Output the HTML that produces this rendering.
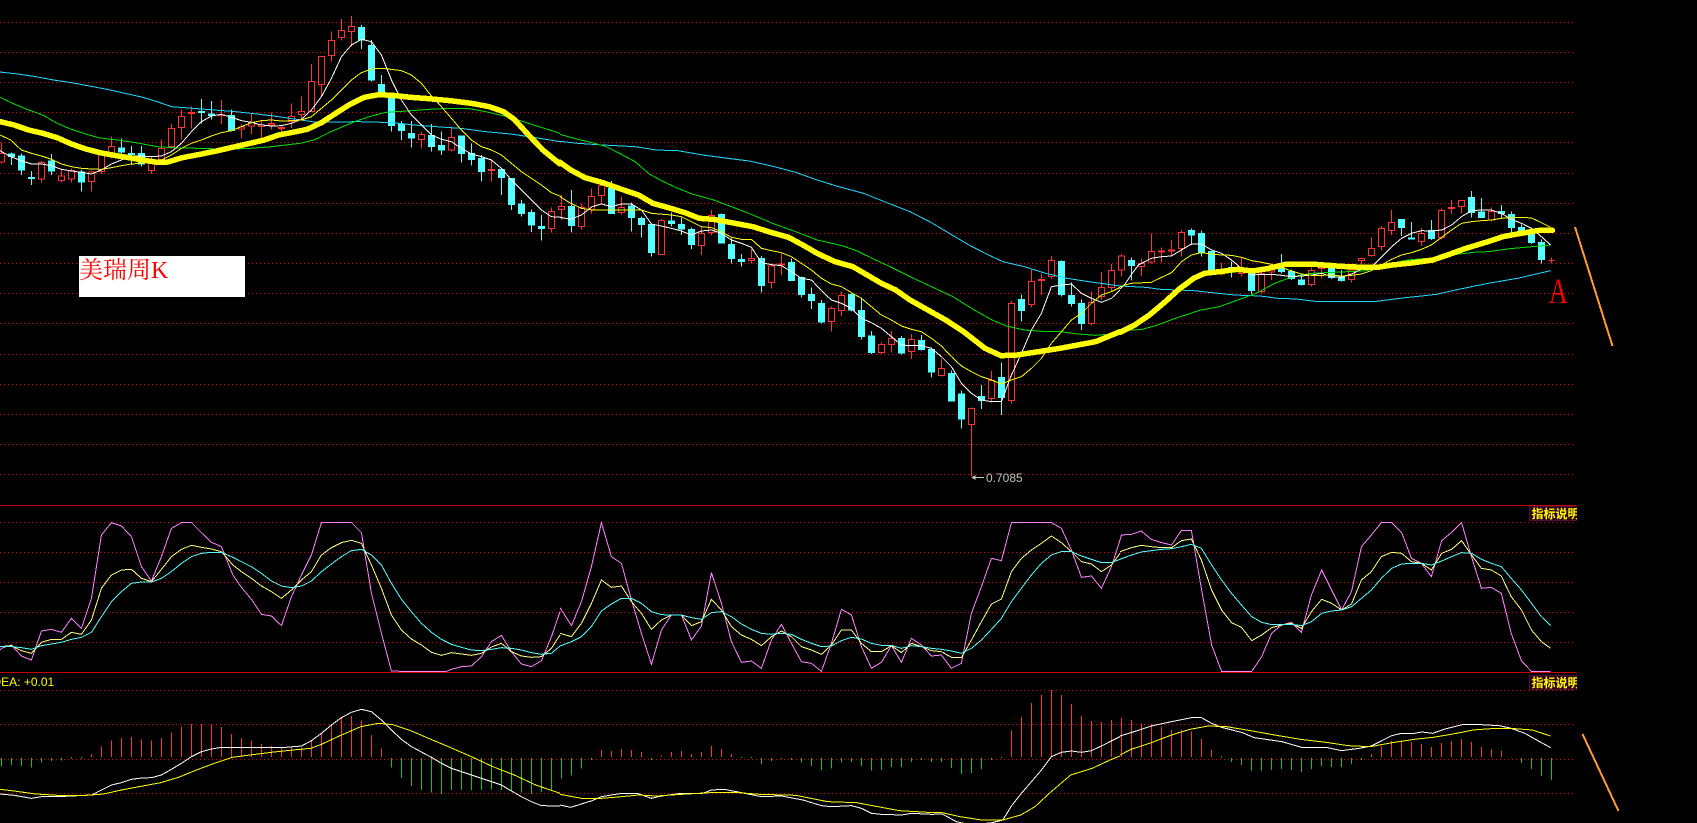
<!DOCTYPE html>
<html><head><meta charset="utf-8"><title>美瑞周K</title>
<style>
html,body{margin:0;padding:0;background:#000;width:1697px;height:823px;overflow:hidden}
svg{display:block;position:absolute;left:0;top:0}
path,polyline,line{vector-effect:non-scaling-stroke;shape-rendering:crispEdges;fill:none}
.w{stroke:#fff;stroke-width:1}.y{stroke:#ff0;stroke-width:1}.g{stroke:#00e000;stroke-width:1}.c{stroke:#20d8ff;stroke-width:1}
.t{stroke:#ff0;stroke-width:5.5;stroke-linejoin:round;stroke-linecap:round}
.j{stroke:#ff80ff;stroke-width:1}.k{stroke:#ffff80;stroke-width:1}.d{stroke:#55ffff;stroke-width:1}
.rw{stroke:#ff3232;stroke-width:1}.cw{stroke:#55ffff;stroke-width:1}
.rb{stroke:#ff3232;stroke-width:1;fill:#000}.cb{stroke:#55ffff;stroke-width:1;fill:#55ffff}
.my{stroke:#ff0;stroke-width:1}.mw{stroke:#fff;stroke-width:1}
</style></head><body>
<svg width="1697" height="823" viewBox="0 0 1697 823" xmlns="http://www.w3.org/2000/svg">
<rect width="1697" height="823" fill="#000"/>
<!-- grid -->
<path stroke="#e00000" stroke-dasharray="1 3" d="M0 22.5H1576M0 52.5H1576M0 82.5H1576M0 112.5H1576M0 142.5H1576M0 173.5H1576M0 203.5H1576M0 233.5H1576M0 263.5H1576M0 293.5H1576M0 323.5H1576M0 354.5H1576M0 384.5H1576M0 414.5H1576M0 444.5H1576M0 474.5H1576M0 522.5H1576M0 552.5H1576M0 582.5H1576M0 612.5H1576M0 642.5H1576M0 690.5H1576M0 724.5H1576M0 759.5H1576M0 793.5H1576"/>
<path stroke="#c80000" d="M0 505.5H1576M0 672.5H1576"/>

<!-- white label -->
<rect x="79" y="256" width="166" height="41" fill="#fff"/>
<text x="79" y="278" font-size="24" fill="#f00" font-family="'Liberation Serif','Noto Serif CJK SC',serif">美瑞周K</text>

<!-- candles A -->
<g transform="scale(1,.33333)">
<path class="rw" d="M1.5 428V490M41.5 483V548M61.5 508V548M71.5 505V548M91.5 512V575M101.5 460V522M111.5 410V475M151.5 470V522M161.5 418V480M171.5 372V445M181.5 328V418M191.5 320V385M221.5 300V372M241.5 372V414M251.5 340V402M261.5 362V418M271.5 338V388M281.5 378V398M291.5 310V384M301.5 290V358M311.5 192V336M321.5 168V290M331.5 95V185M341.5 57V122M351.5 48V140M421.5 396V445M451.5 380V455M491.5 478V545M551.5 622V698"/>
<path class="cw" d="M11.5 458V495M21.5 460V525M31.5 513V555M51.5 462V525M81.5 510V575M121.5 415V460M131.5 438V495M141.5 438V500M201.5 297V370M211.5 303V358M231.5 328V395M361.5 75V147M371.5 120V245M381.5 225V282M391.5 280V395M401.5 363V420M411.5 363V443M431.5 372V455M441.5 395V465M461.5 406V488M471.5 430V497M481.5 465V545M501.5 508V585M511.5 535V630M521.5 600V650M531.5 628V696M541.5 645V722"/>
<path class="rb" d="M-1.5 460h6v26h-6zM38.5 487h6v50h-6zM58.5 528h6v14h-6zM68.5 511h6v26h-6zM88.5 516h6v29h-6zM98.5 464h6v51h-6zM108.5 439h6v26h-6zM148.5 478h6v34h-6zM158.5 445h6v33h-6zM168.5 385h6v55h-6zM178.5 349h6v33h-6zM188.5 338h6v2h-6zM218.5 345h6v2h-6zM238.5 381h6v6h-6zM248.5 368h6v10h-6zM258.5 375h6v5h-6zM268.5 370h6v5h-6zM278.5 382h6v4h-6zM288.5 350h6v15h-6zM298.5 334h6v10h-6zM308.5 244h6v91h-6zM318.5 169h6v84h-6zM328.5 122h6v44h-6zM338.5 92h6v21h-6zM348.5 79h6v15h-6zM418.5 403h6v16h-6zM448.5 412h6v38h-6zM488.5 508h6v4h-6zM548.5 635h6v51h-6z"/>
<path class="cb" d="M8.5 462h6v8h-6zM18.5 468h6v42h-6zM28.5 532h6v4h-6zM48.5 483h6v30h-6zM78.5 516h6v30h-6zM118.5 444h6v12h-6zM128.5 460h6v4h-6zM138.5 460h6v32h-6zM198.5 334h6v4h-6zM208.5 342h6v4h-6zM228.5 346h6v46h-6zM358.5 82h6v38h-6zM368.5 136h6v104h-6zM378.5 253h6v27h-6zM388.5 293h6v83h-6zM398.5 373h6v19h-6zM408.5 400h6v14h-6zM428.5 406h6v34h-6zM438.5 436h6v14h-6zM458.5 408h6v53h-6zM468.5 460h6v19h-6zM478.5 475h6v40h-6zM498.5 508h6v25h-6zM508.5 535h6v79h-6zM518.5 612h6v29h-6zM528.5 637h6v38h-6zM538.5 679h6v7h-6z"/>
</g>
<!-- candles B -->
<g transform="translate(0,100) scale(1,.33333)">
<path class="rw" d="M561.5 285V360M581.5 310V388M591.5 265V340M601.5 255V310M621.5 290V343M661.5 357V465M701.5 378V465M711.5 330V405M751.5 445V490M771.5 490V566M781.5 460V525M831.5 620V695M841.5 575V648M881.5 727V762M891.5 693V757M911.5 702V777M941.5 775V830M971.5 922V1130M991.5 813V907M1011.5 603V910M1031.5 508V623M1041.5 520V585M1051.5 468V537M1091.5 574V677M1101.5 516V600M1111.5 492V574"/>
<path class="cw" d="M571.5 270V398M611.5 243V342M631.5 307V395M641.5 350V413M651.5 370V470M671.5 337V380M681.5 352V405M691.5 382V447M721.5 340V430M731.5 415V490M741.5 462V500M761.5 468V578M791.5 475V543M801.5 530V593M811.5 562V627M821.5 600V670M851.5 580V635M861.5 595V718M871.5 693V762M901.5 708V763M921.5 705V752M931.5 742V833M951.5 812V903M961.5 872V985M981.5 855V927M1001.5 787V945M1021.5 583V665M1061.5 482V590M1071.5 548V620M1081.5 598V690"/>
<path class="rb" d="M558.5 320h6v8h-6zM578.5 322h6v58h-6zM588.5 290h6v38h-6zM598.5 257h6v29h-6zM618.5 323h6v14h-6zM658.5 362h6v102h-6zM698.5 400h6v36h-6zM708.5 347h6v51h-6zM748.5 476h6v6h-6zM768.5 498h6v49h-6zM778.5 492h6v3h-6zM828.5 625h6v39h-6zM838.5 587h6v44h-6zM878.5 734h6v24h-6zM888.5 716h6v17h-6zM908.5 719h6v36h-6zM938.5 806h6v21h-6zM968.5 926h6v47h-6zM988.5 841h6v54h-6zM1008.5 611h6v291h-6zM1028.5 545h6v68h-6zM1038.5 538h6v3h-6zM1048.5 482h6v48h-6zM1088.5 608h6v62h-6zM1098.5 563h6v27h-6zM1108.5 512h6v51h-6z"/>
<path class="cb" d="M568.5 319h6v58h-6zM608.5 265h6v76h-6zM628.5 318h6v35h-6zM638.5 355h6v19h-6zM648.5 373h6v85h-6zM668.5 363h6v8h-6zM678.5 373h6v14h-6zM688.5 388h6v46h-6zM718.5 343h6v86h-6zM728.5 433h6v43h-6zM738.5 478h6v7h-6zM758.5 476h6v81h-6zM788.5 487h6v55h-6zM798.5 533h6v51h-6zM808.5 583h6v19h-6zM818.5 610h6v56h-6zM848.5 583h6v47h-6zM858.5 632h6v78h-6zM868.5 708h6v50h-6zM898.5 715h6v44h-6zM918.5 721h6v28h-6zM928.5 748h6v68h-6zM948.5 820h6v83h-6zM958.5 882h6v75h-6zM978.5 889h6v13h-6zM998.5 832h6v61h-6zM1018.5 598h6v34h-6zM1058.5 485h6v99h-6zM1068.5 586h6v25h-6zM1078.5 610h6v60h-6z"/>
</g>
<!-- candles C -->
<g transform="translate(0,170) scale(1,.33333)">
<path class="rw" d="M1121.5 252V320M1141.5 265V318M1151.5 190V280M1161.5 232V278M1171.5 210V260M1181.5 180V260M1221.5 278V316M1241.5 262V320M1261.5 305V370M1271.5 290V330M1311.5 292V350M1321.5 285V325M1351.5 295V338M1361.5 262V295M1371.5 202V260M1381.5 168V242M1391.5 120V195M1421.5 174V228M1441.5 115V208M1451.5 90V132M1461.5 90V130M1491.5 112V155M1551.5 263V280"/>
<path class="cw" d="M1131.5 262V332M1191.5 175V225M1201.5 181V260M1211.5 243V310M1231.5 275V322M1251.5 305V372M1281.5 252V310M1291.5 298V330M1301.5 315V347M1331.5 278V327M1341.5 300V335M1401.5 147V198M1411.5 156V208M1431.5 150V210M1471.5 63V143M1481.5 84V143M1501.5 105V145M1511.5 124V190M1521.5 163V190M1531.5 172V222M1541.5 208V280"/>
<path class="rb" d="M1118.5 258h6v42h-6zM1138.5 281h6v9h-6zM1148.5 244h6v32h-6zM1158.5 243h6v3h-6zM1168.5 240h6v3h-6zM1178.5 187h6v48h-6zM1218.5 300h6v12h-6zM1238.5 305h6v5h-6zM1258.5 310h6v55h-6zM1268.5 300h6v6h-6zM1308.5 301h6v43h-6zM1318.5 293h6v3h-6zM1348.5 300h6v28h-6zM1358.5 266h6v6h-6zM1368.5 236h6v21h-6zM1378.5 175h6v55h-6zM1388.5 157h6v25h-6zM1418.5 190h6v25h-6zM1438.5 121h6v82h-6zM1448.5 113h6v3h-6zM1458.5 91h6v18h-6zM1488.5 124h6v26h-6zM1548.5 271h6"/>
<path class="cb" d="M1128.5 271h6v16h-6zM1188.5 181h6v14h-6zM1198.5 190h6v58h-6zM1208.5 245h6v55h-6zM1228.5 292h6v3h-6zM1248.5 310h6v52h-6zM1278.5 296h6v8h-6zM1288.5 305h6v20h-6zM1298.5 330h6v14h-6zM1328.5 295h6v27h-6zM1338.5 323h6v8h-6zM1398.5 148h6v24h-6zM1408.5 204h6v3h-6zM1428.5 181h6v25h-6zM1468.5 82h6v46h-6zM1478.5 126h6v17h-6zM1498.5 124h6v7h-6zM1508.5 133h6v40h-6zM1518.5 172h6v14h-6zM1528.5 187h6v31h-6zM1538.5 217h6v52h-6z"/>
</g>

<!-- MA lines A -->
<g transform="scale(.35714,.33333)">
<polyline class="c" points="0,216 50,222 100,230 150,240 200,248 250,258 300,268 350,280 400,292 440,305 480,320 540,325 600,330 660,335 720,342 780,350 830,358 880,366 940,366 1000,365 1040,366 1100,368 1160,375 1220,380 1290,385 1360,395 1430,402 1500,413 1568,425"/>
<polyline class="g" points="0,292 40,312 80,330 120,345 160,370 200,388 240,402 280,414 330,420 380,428 440,440 500,444 560,445 640,448 700,445 760,440 800,435 840,430 880,420 920,398 960,380 1000,362 1040,348 1080,337 1140,333 1200,328 1260,325 1310,325 1360,335 1420,350 1480,370 1568,400"/>
<polyline class="w" points="0,452 30,470 60,482 88,492 116,492 144,497 172,508 200,513 228,517 256,522 284,510 312,492 340,480 368,468 396,468 424,470 452,468 480,455 508,430 536,395 564,365 592,348 620,343 648,352 676,362 704,367 732,375 760,378 788,377 816,370 844,358 872,330 900,290 928,235 956,170 984,135 1012,118 1040,125 1068,165 1096,240 1124,300 1152,345 1180,375 1208,405 1236,418 1264,425 1292,445 1320,462 1348,470 1376,480 1404,505 1432,540 1460,570 1488,600 1516,630 1544,650 1572,652"/>
<polyline class="y" points="0,405 30,420 60,450 88,460 116,468 144,478 172,492 200,500 228,505 256,507 284,508 312,503 340,497 368,492 396,490 424,484 452,480 480,465 508,445 536,430 564,420 592,408 620,398 648,392 676,380 704,368 732,362 760,360 788,363 816,362 844,360 872,350 900,325 928,300 956,270 984,240 1012,218 1040,207 1068,205 1096,208 1124,212 1152,225 1180,250 1208,288 1236,320 1264,355 1292,390 1320,420 1348,440 1376,450 1404,465 1432,490 1460,515 1488,535 1516,555 1544,578 1572,590"/>
<polyline class="t" points="0,365 40,375 80,390 120,400 160,413 200,432 240,447 280,458 320,466 360,473 400,480 440,487 470,486 510,473 560,463 610,452 650,442 700,430 740,420 780,405 820,397 860,388 900,368 940,340 980,313 1020,292 1060,284 1100,286 1150,292 1200,296 1260,302 1320,310 1370,320 1410,335 1440,358 1480,405 1520,450 1568,492"/>
</g>
<!-- MA lines B -->
<g transform="translate(560,100) scale(.35714,.33333)">
<polyline class="c" points="0,124 50,130 120,135 210,140 270,150 330,152 400,165 470,175 530,183 600,200 660,217 720,240 780,260 850,280 920,310 980,335 1040,368 1090,400 1150,438 1200,465 1240,485 1300,500 1360,520 1420,535 1480,545 1568,558"/>
<polyline class="g" points="0,103 40,115 90,128 130,140 170,162 210,185 250,222 290,245 330,265 370,282 430,300 480,320 540,345 600,372 660,395 720,420 790,437 830,452 880,478 930,503 980,530 1040,560 1100,590 1160,630 1210,660 1250,678 1300,690 1350,694 1400,695 1450,702 1500,706 1568,700"/>
<polyline class="w" points="0,352 30,358 60,345 90,320 116,312 144,320 172,312 200,312 228,330 256,372 284,378 312,385 340,393 368,405 396,393 424,390 452,400 480,420 508,430 536,442 564,488 592,494 620,497 648,515 676,535 704,540 732,572 760,600 788,610 816,625 844,655 872,668 900,685 928,710 956,735 984,737 1012,737 1040,745 1068,770 1096,800 1124,850 1152,880 1180,900 1208,905 1236,905 1264,825 1292,760 1320,690 1348,640 1376,560 1404,555 1432,552 1460,580 1488,595 1516,607 1544,595 1568,570"/>
<polyline class="y" points="0,290 30,310 60,325 90,330 130,330 172,330 228,330 256,340 312,345 340,350 368,365 396,380 424,383 452,395 480,412 508,418 536,418 564,445 592,452 620,458 648,470 676,490 704,510 732,535 760,552 788,560 816,578 844,595 872,620 900,645 928,660 956,678 984,688 1012,695 1040,715 1068,738 1096,770 1124,798 1152,815 1180,830 1208,840 1236,852 1264,840 1292,830 1320,805 1348,775 1376,730 1404,695 1432,660 1460,640 1488,610 1516,585 1544,575 1568,562"/>
<polyline class="t" points="0,187 30,210 70,233 120,248 170,267 220,285 260,310 310,325 350,338 390,355 430,358 490,370 540,380 590,397 640,412 680,435 720,460 770,485 820,500 860,525 900,550 940,570 980,600 1030,630 1080,660 1130,695 1190,745 1235,767 1280,765 1340,755 1400,745 1450,735 1500,725 1568,695"/>
</g>
<!-- MA lines C -->
<g transform="translate(1120,170) scale(.36805,.33333)">
<polyline class="c" points="0,348 70,352 110,358 200,362 250,368 310,375 380,378 430,385 480,387 530,394 600,395 690,395 760,385 860,373 920,358 1000,340 1080,325 1170,302"/>
<polyline class="g" points="0,483 60,478 100,466 150,445 220,420 270,410 320,390 370,370 420,340 470,320 520,310 600,306 670,302 720,285 780,270 850,264 900,255 960,247 1000,245 1060,236 1120,230 1170,225"/>
<polyline class="w" points="0,357 15,340 30,315 50,285 85,265 113,260 140,258 167,240 194,222 221,222 249,240 276,250 303,270 330,295 358,315 385,313 412,313 439,316 466,320 493,318 520,315 548,310 575,320 602,322 629,312 656,298 683,292 710,262 738,230 765,205 792,190 819,182 846,183 874,180 901,165 928,140 955,122 982,120 1009,120 1036,130 1063,148 1091,160 1118,175 1145,200 1170,225"/>
<polyline class="y" points="0,350 30,340 85,337 113,322 140,308 167,275 194,255 221,248 249,252 276,255 303,256 330,262 358,272 385,277 412,283 439,292 466,303 493,312 520,316 548,316 575,315 602,318 629,316 656,312 683,302 710,285 738,268 765,255 792,248 819,238 846,225 874,202 901,180 928,160 955,155 982,152 1009,150 1036,145 1063,143 1091,142 1118,144 1145,158 1170,172"/>
<polyline class="t" points="0,487 40,465 80,435 120,398 160,358 200,325 230,310 270,305 320,298 360,303 400,296 450,283 530,283 600,289 660,292 700,292 740,285 800,278 850,270 890,255 940,235 1000,215 1040,200 1090,190 1140,181 1175,181"/>
</g>

<!-- KDJ -->
<g transform="translate(0,500) scale(.35714,.33333)">
<polyline class="j" points="0,450 4,445 32,435 60,468 88,480 116,393 144,388 172,397 200,355 228,385 256,295 284,105 312,68 340,78 368,110 396,200 424,243 452,170 480,85 508,68 536,68 564,98 592,127 620,140 652,225 676,262 704,298 732,343 760,348 788,377 816,290 844,225 872,165 900,68 928,68 956,68 984,68 1012,98 1040,280 1068,400 1096,513 1124,514 1152,514 1180,514 1208,514 1250,514 1264,508 1292,500 1320,498 1348,470 1376,425 1404,406 1432,455 1460,492 1488,500 1516,482 1544,410 1568,335"/>
<polyline class="k" points="0,440 32,437 60,452 88,460 116,427 144,418 172,418 200,397 228,403 256,360 284,265 312,225 340,210 368,208 396,235 424,245 452,208 480,170 508,148 536,136 564,142 592,147 620,155 652,195 676,215 704,235 732,258 760,275 788,295 816,270 844,240 872,215 900,165 928,143 956,128 984,121 1012,130 1040,195 1068,265 1096,345 1124,390 1152,417 1180,435 1208,457 1236,466 1264,458 1292,462 1320,466 1348,460 1376,441 1404,430 1432,455 1460,468 1488,472 1516,470 1544,445 1568,405"/>
<polyline class="d" points="0,440 32,440 60,443 88,448 116,437 144,432 172,427 200,418 228,412 256,397 284,350 312,305 340,275 368,250 396,246 424,246 452,235 480,215 508,190 536,170 564,160 592,157 620,157 652,172 676,185 704,200 732,220 760,243 788,258 816,263 844,258 872,243 900,215 928,192 956,170 984,152 1012,148 1040,165 1068,195 1096,250 1124,298 1152,335 1180,370 1208,397 1236,418 1264,433 1292,442 1320,450 1348,452 1376,448 1404,443 1432,445 1460,450 1488,458 1516,463 1544,460 1568,438"/>
</g>
<g transform="translate(560,500) scale(.35714,.33333)">
<polyline class="j" points="0,323 32,377 60,305 88,200 116,68 144,170 172,190 200,300 228,400 256,493 284,390 312,345 340,345 368,420 396,378 424,218 452,310 480,425 508,487 536,483 564,505 592,420 620,373 648,430 676,485 704,490 732,514 760,430 788,328 816,345 844,440 872,505 900,487 928,437 956,487 984,415 1012,435 1040,468 1068,465 1096,505 1124,490 1152,340 1180,260 1208,175 1236,182 1264,68 1376,68 1404,85 1432,150 1460,232 1488,228 1516,265 1544,200 1568,120"/>
<polyline class="k" points="0,400 32,410 60,370 88,310 116,240 144,262 172,258 200,305 228,340 256,388 284,360 312,345 340,345 368,377 396,365 424,298 452,330 480,380 508,405 536,418 564,437 592,410 620,393 648,410 676,440 704,450 732,463 760,435 788,390 816,390 844,430 872,455 900,455 928,437 956,458 984,430 1012,440 1040,452 1068,455 1096,472 1124,473 1152,420 1180,365 1208,312 1236,297 1264,215 1292,175 1320,150 1348,130 1376,108 1404,128 1432,155 1460,185 1488,192 1516,215 1544,195 1568,160"/>
<polyline class="d" points="0,438 32,425 60,410 88,380 116,333 144,312 172,295 200,295 228,310 256,335 284,344 312,345 340,345 368,353 396,358 424,338 452,335 480,350 508,372 536,388 564,400 592,403 620,400 648,403 676,418 704,430 732,440 760,438 788,422 816,412 844,417 872,430 900,436 928,436 956,445 984,437 1012,440 1040,445 1068,448 1096,453 1124,460 1152,445 1180,420 1208,388 1236,355 1264,305 1292,265 1320,225 1348,190 1376,165 1404,155 1432,155 1460,168 1488,178 1516,188 1544,188 1568,178"/>
</g>
<g transform="translate(1120,500) scale(.36805,.33333)">
<polyline class="j" points="0,120 4,105 31,103 58,93 85,118 113,128 140,135 167,91 194,91 221,265 249,435 276,514 303,514 330,514 358,514 385,470 412,400 439,375 466,367 493,397 520,285 548,210 575,270 602,330 629,275 656,140 683,105 710,68 738,68 765,97 792,175 819,190 846,230 874,122 901,97 928,68 955,170 982,265 1009,262 1036,280 1063,400 1091,483 1118,514 1145,514 1170,514"/>
<polyline class="k" points="0,155 31,143 58,136 85,140 113,143 140,143 167,122 194,117 221,180 249,270 276,330 303,368 330,382 358,422 385,405 412,383 439,375 466,370 493,385 520,335 548,298 575,310 602,330 629,312 656,240 683,215 710,170 738,157 765,160 792,185 819,190 846,210 874,160 901,148 928,122 955,165 982,205 1009,210 1036,228 1063,290 1091,330 1118,390 1145,425 1170,445"/>
<polyline class="d" points="0,178 31,165 58,156 85,152 113,148 140,146 167,140 194,133 221,145 249,195 276,240 303,280 330,315 358,350 385,367 412,374 439,374 466,373 493,377 520,365 548,340 575,333 602,330 629,320 656,295 683,270 710,235 738,205 765,192 792,190 819,190 846,195 874,183 901,170 928,158 955,160 982,178 1009,190 1036,200 1063,235 1091,270 1118,310 1145,350 1170,377"/>
</g>

<!-- MACD bars -->
<g transform="translate(0,500) scale(1,.33333)">
<path stroke="#ff3232" d="M91.5 771V762M101.5 771V740M111.5 771V722M121.5 771V714M131.5 771V711M141.5 771V719M151.5 771V722M161.5 771V714M171.5 771V698M181.5 771V680M191.5 771V672M201.5 771V672M211.5 771V674M221.5 771V681M231.5 771V702M241.5 771V714M251.5 771V722M261.5 771V732M271.5 771V738M281.5 771V743M291.5 771V743M301.5 771V742M311.5 771V720M321.5 771V697M331.5 771V672M341.5 771V652M351.5 771V648M361.5 771V662M371.5 771V705M381.5 771V746
M601.5 771V750M611.5 771V753M621.5 771V747M631.5 771V750M641.5 771V756M661.5 771V766M671.5 771V756M681.5 771V753M691.5 771V762M701.5 771V756M711.5 771V738M721.5 771V747M731.5 771V762M1011.5 771V692M1021.5 771V651M1031.5 771V609M1041.5 771V585M1051.5 771V570M1061.5 771V585M1071.5 771V612M1081.5 771V648M1091.5 771V663M1101.5 771V666M1111.5 771V660
M1121.5 771V654M1131.5 771V660M1141.5 771V670M1151.5 771V672M1161.5 771V680M1171.5 771V690M1181.5 771V688M1191.5 771V695M1201.5 771V717M1211.5 771V750M1371.5 771V762M1381.5 771V738M1391.5 771V723M1401.5 771V722M1411.5 771V726M1421.5 771V732M1431.5 771V741M1441.5 771V729M1451.5 771V723M1461.5 771V717M1471.5 771V726M1481.5 771V741M1491.5 771V747M1501.5 771V753"/>
<path stroke="#10c810" d="M1.5 774V800M11.5 774V795M21.5 774V798M31.5 774V803M41.5 774V788M51.5 774V783M61.5 774V782M71.5 771V775M81.5 771V775M391.5 774V802M401.5 774V834M411.5 774V858M421.5 774V870M431.5 774V878M441.5 774V882M451.5 774V870M461.5 774V870M471.5 774V870M481.5 774V870M491.5 774V868M501.5 774V870M511.5 774V872M521.5 774V878M531.5 774V882M541.5 774V876M551.5 774V870
M561.5 774V836M571.5 774V827M581.5 774V806M591.5 774V780M651.5 774V780M741.5 771V774M751.5 771V774M761.5 774V792M771.5 774V783M781.5 774V777M791.5 774V780M801.5 774V788M811.5 774V798M821.5 774V810M831.5 774V806M841.5 774V788M851.5 774V786M861.5 774V798M871.5 774V812M881.5 774V810M891.5 774V801M901.5 774V801M911.5 774V786M921.5 774V780M931.5 774V786M941.5 774V786M951.5 774V804M961.5 774V822M971.5 774V819M981.5 774V807M991.5 774V780M1001.5 771V774
M1221.5 768V772M1231.5 774V786M1241.5 774V795M1251.5 774V812M1261.5 774V812M1271.5 774V810M1281.5 774V807M1291.5 774V810M1301.5 774V816M1311.5 774V807M1321.5 774V798M1331.5 774V801M1341.5 774V801M1351.5 774V792M1361.5 774V780M1511.5 771V773M1521.5 774V789M1531.5 774V807M1541.5 774V828M1551.5 774V840"/>
</g>
<!-- MACD lines -->
<g transform="translate(0,500) scale(.35714,.33333)">
<polyline class="mw" points="0,882 40,886 88,895 116,890 160,890 200,888 256,885 284,870 312,855 340,848 368,838 396,834 424,833 452,825 480,808 508,790 536,770 564,755 592,747 620,742 700,742 760,742 800,742 844,738 872,722 900,700 928,675 956,653 984,637 1012,628 1040,635 1068,660 1096,690 1124,718 1152,740 1208,772 1236,790 1264,805 1320,825 1376,845 1404,855 1432,873 1460,890 1488,905 1516,917 1568,918"/>
<polyline class="my" points="0,868 40,873 100,882 160,886 230,887 290,882 340,870 400,858 450,848 500,832 550,810 600,790 650,772 700,765 760,757 820,750 870,745 900,733 950,708 1010,680 1060,670 1100,674 1150,692 1200,715 1260,742 1320,770 1380,800 1440,825 1500,855 1568,880"/>
</g>
<g transform="translate(560,500) scale(.35714,.33333)">
<polyline class="mw" points="0,915 30,922 60,912 90,902 116,890 144,885 172,880 216,880 256,895 284,888 340,880 400,880 424,870 460,868 508,878 564,890 620,888 680,900 732,917 760,920 816,917 844,925 872,940 900,943 956,945 984,940 1040,943 1070,942 1110,965 1150,975 1210,968 1240,960 1264,918 1292,880 1320,845 1348,810 1376,770 1404,757 1432,753 1460,757 1488,752 1516,738 1568,710"/>
<polyline class="my" points="0,883 60,895 116,895 172,890 220,885 270,888 340,883 420,878 500,878 560,883 660,886 750,905 830,908 890,920 950,932 1030,937 1070,938 1120,950 1180,960 1240,960 1290,945 1330,920 1370,880 1430,825 1490,805 1540,780 1568,768"/>
</g>
<g transform="translate(1120,500) scale(.36805,.33333)">
<polyline class="mw" points="0,708 30,698 85,678 140,665 194,653 221,653 249,670 276,682 330,697 365,713 440,725 493,742 560,742 602,752 650,745 683,738 738,707 765,700 800,700 820,696 850,700 880,688 930,674 965,673 1030,677 1060,684 1100,700 1140,725 1170,743"/>
<polyline class="my" points="0,765 30,748 85,728 140,705 190,688 240,678 290,680 360,693 430,707 490,718 560,727 620,737 680,740 740,728 800,718 850,712 900,703 960,690 1020,685 1060,685 1120,690 1170,708"/>
</g>

<!-- low marker -->
<path stroke="#c8c8c8" d="M975 477.5H984"/>
<path stroke="none" style="fill:#c8c8c8" d="M971.5 477.5L975.5 475V480Z"/>
<text x="986" y="482" font-size="12" fill="#c0c0c0" font-family="'Liberation Sans',sans-serif">0.7085</text>

<!-- DEA text -->
<text x="-7.5" y="686" font-size="12" fill="#ff0" font-family="'Liberation Sans',sans-serif">DEA: +0.01</text>

<!-- labels -->
<svg x="1529" y="505" width="48" height="17" viewBox="0 0 48 17">
<rect x=".5" y="1.5" width="60" height="14" fill="#300018" stroke="#802060" stroke-dasharray="1 1"/>
<text x="2.5" y="13" font-size="12" font-weight="bold" fill="#ff0" font-family="'Liberation Sans','Noto Sans CJK SC',sans-serif">指标说明</text>
</svg>
<svg x="1529" y="674" width="48" height="17" viewBox="0 0 48 17">
<rect x=".5" y="1.5" width="60" height="14" fill="#300018" stroke="#802060" stroke-dasharray="1 1"/>
<text x="2.5" y="13" font-size="12" font-weight="bold" fill="#ff0" font-family="'Liberation Sans','Noto Sans CJK SC',sans-serif">指标说明</text>
</svg>

<!-- A -->
<text transform="translate(1549,303) scale(.72,1)" x="0" y="0" font-size="36" fill="#f00" font-family="'Liberation Serif',serif">A</text>

<!-- orange trend lines -->
<path stroke="#ff9a33" stroke-width="2" d="M1575 227L1612.5 346"/>
<path stroke="#ff9a33" stroke-width="2" d="M1582.5 734L1618.5 811"/>
</svg>
</body></html>
